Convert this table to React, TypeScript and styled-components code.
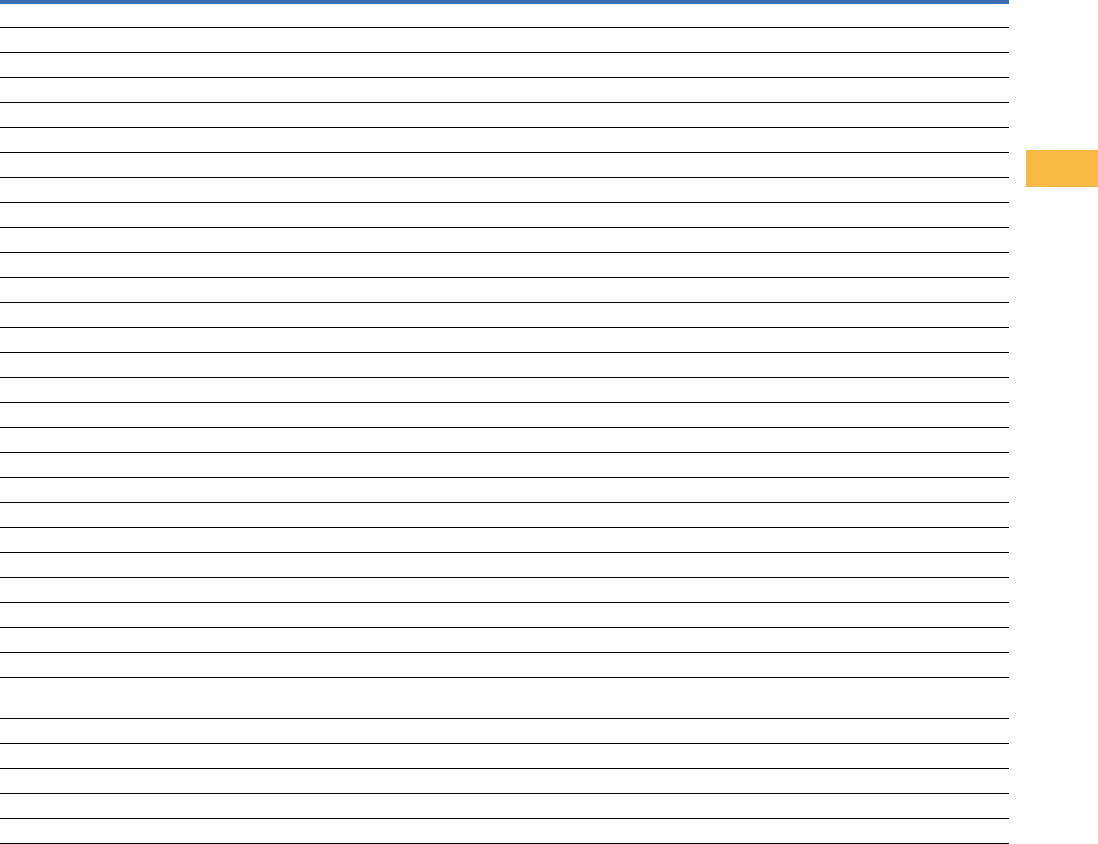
import { createGlobalStyle, styled } from "styled-components";

const GlobalStyle = createGlobalStyle`
  html, body {
    margin: 0;
    padding: 0;
    background: #ffffff;
    font-family: "Liberation Sans", Arial, sans-serif;
  }
`;

const ROW_COUNT = 36;
const TALL_ROW = 26;

export default function App() {
  return (
    <>
      <GlobalStyle />
      <StyledPage>
        <StyledSheet>
          <StyledHeaderRow />
          {Array.from({ length: ROW_COUNT }, (_, i) => (
            <StyledRow key={i} $tall={i === TALL_ROW} />
          ))}
        </StyledSheet>
        <StyledSide>
          <StyledTab aria-label="tab" />
        </StyledSide>
      </StyledPage>
    </>
  );
}

const StyledPage = styled.div`
  display: grid;
  grid-template-columns: 1009px 1fr;
  height: 844px;
  overflow: hidden;
`;

const StyledSheet = styled.div`
  display: flex;
  flex-direction: column;
`;

const StyledHeaderRow = styled.div`
  flex: none;
  height: 23px;
  border-top: 4px solid #3d6cb5;
  border-bottom: 1px solid #000000;
`;

const StyledRow = styled.div<{ $tall?: boolean }>`
  flex: none;
  height: ${(props) => (props.$tall ? "40px" : "24px")};
  border-bottom: 1px solid #000000;
`;

const StyledSide = styled.aside`
  display: flex;
  justify-content: flex-end;
  align-items: flex-start;
  padding-top: 150px;
`;

const StyledTab = styled.div`
  width: 72px;
  height: 37px;
  background: #f7b844;
`;
